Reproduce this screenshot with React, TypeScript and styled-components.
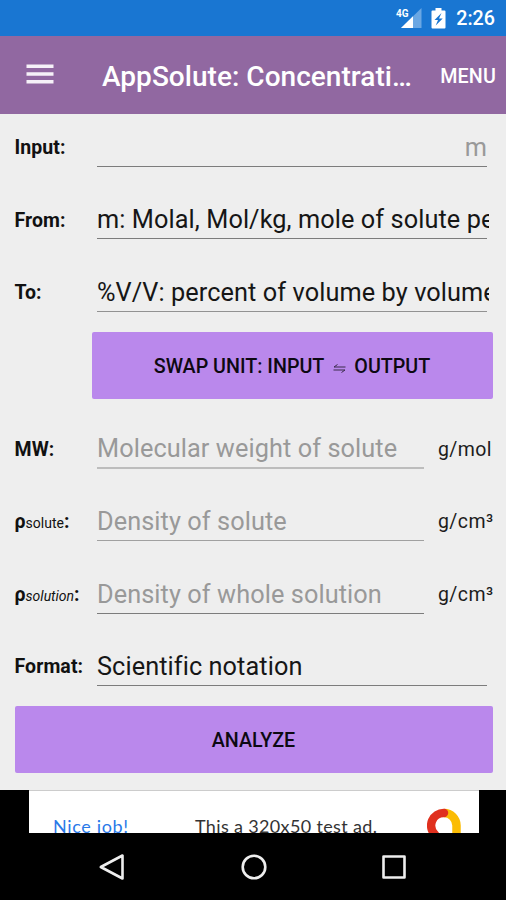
import React from "react";
import styled, { createGlobalStyle } from "styled-components";

const GlobalStyle = createGlobalStyle`
  * { box-sizing: border-box; }
  html, body { margin: 0; padding: 0; background: #000; }
  body { font-family: Roboto, "Liberation Sans", sans-serif; overflow: hidden; }
`;

const Screen = styled.div`
  width: 506px;
  height: 900px;
  display: flex;
  flex-direction: column;
  background: #eee;
  overflow: hidden;
`;

const StatusBar = styled.div`
  height: 36px;
  flex: none;
  display: flex;
  align-items: center;
  justify-content: flex-end;
  padding-right: 11px;
  background: #1976d2;
  color: #fff;
`;

const SignalIcon = styled.svg`
  width: 27px;
  height: 22px;
  margin-right: 9px;
`;

const BatteryIcon = styled.svg`
  width: 15px;
  height: 21px;
  margin-right: 10px;
`;

const Clock = styled.span`
  font-size: 19.7px;
  font-weight: 500;
  line-height: 36px;
  padding-top: 2px;
`;

const AppBar = styled.header`
  height: 78px;
  flex: none;
  display: flex;
  align-items: center;
  padding: 4px 10px 0 26px;
  background: #9168a1;
  color: #fff;
`;

const MenuIcon = styled.svg`
  width: 28px;
  height: 20px;
  margin: -6px 48px 0 0;
`;

const Title = styled.h1`
  flex: 1;
  margin: 0;
  font-size: 28px;
  font-weight: 500;
  line-height: 36px;
  letter-spacing: 0.03px;
  white-space: nowrap;
`;

const MenuButton = styled.button`
  border: 0;
  padding: 0;
  background: none;
  color: #fff;
  font: 500 19.7px/30px Roboto, sans-serif;
  letter-spacing: 0.15px;
`;

const Form = styled.main`
  height: 676px;
  flex: none;
  padding: 14px 13.5px 0 14.5px;
  display: flex;
  flex-direction: column;
`;

const Row = styled.div<{ $gap?: number }>`
  display: flex;
  flex: none;
  align-items: center;
  height: 39px;
  margin-top: ${(p) => p.$gap ?? 33.4}px;
`;

const Label = styled.label`
  width: 82.5px;
  flex: none;
  padding-top: 1.5px;
  font-size: 19.5px;
  font-weight: 700;
  line-height: 28px;
  letter-spacing: 0.08px;
  color: #111;
  white-space: nowrap;
`;

const Subscript = styled.span<{ $italic?: boolean }>`
  font-size: 14px;
  font-weight: 400;
  letter-spacing: 0;
  font-style: ${(p) => (p.$italic ? "italic" : "normal")};
`;

const Field = styled.div<{
  $short?: boolean;
  $hint?: boolean;
  $right?: boolean;
  $line?: string;
  $thick?: boolean;
}>`
  width: ${(p) => (p.$short ? 327 : 390)}px;
  height: ${(p) => (p.$thick ? 40 : 39)}px;
  flex: none;
  border-bottom: ${(p) => (p.$thick ? 2 : 1)}px solid ${(p) => p.$line ?? "#7c7c7c"};
  color: ${(p) => (p.$hint ? "#999" : "#161616")};
  text-align: ${(p) => (p.$right ? "right" : "left")};
  padding-right: ${(p) => (p.$right ? 2 : 0)}px;
`;

const Value = styled.div`
  width: calc(100% + 2px);
  overflow: hidden;
  font-size: 25.3px;
  line-height: 39px;
  letter-spacing: 0.08px;
  white-space: nowrap;
`;

const Unit = styled.span`
  margin-left: 14px;
  padding-top: 1px;
  font-size: 19.5px;
  line-height: 28px;
  letter-spacing: 0.4px;
  color: #1c1c1c;
  white-space: nowrap;
`;

const ActionButton = styled.button<{ $top: number; $indent?: boolean }>`
  height: 67px;
  flex: none;
  margin: ${(p) => p.$top}px 0 0 ${(p) => (p.$indent ? 77 : 0)}px;
  display: flex;
  align-items: center;
  justify-content: center;
  gap: 8.5px;
  border: 0;
  border-radius: 2px;
  padding: 4px 0 0;
  background: #ba88ec;
  color: #0d0912;
  font: 500 19.7px/30px Roboto, sans-serif;
`;

const SwapIcon = styled.svg`
  width: 13px;
  height: 9px;
  margin-top: 2px;
`;

const AdSlot = styled.aside`
  height: 44px;
  flex: none;
  padding: 0 27px 0 29px;
  background: #000;
`;

const Ad = styled.div`
  height: 43px;
  display: flex;
  overflow: hidden;
  border-top: 1px solid #ccc;
  background: #fff;
  font-family: Lato, "Open Sans", sans-serif;
  font-size: 18px;
  line-height: 24px;
  color: #333;
`;

const AdLink = styled.span`
  width: 142px;
  margin: 23px 0 0 24px;
  color: #2979e8;
  letter-spacing: 0.65px;
`;

const AdText = styled.span`
  width: 232px;
  margin-top: 23px;
  letter-spacing: 0.35px;
  white-space: nowrap;
`;

const AdLogo = styled.svg`
  width: 34px;
  height: 40px;
  margin-top: 17px;
  flex: none;
`;

const NavBar = styled.nav`
  height: 66px;
  flex: none;
  display: flex;
  align-items: center;
  justify-content: center;
  gap: 112.5px;
  padding-left: 1px;
  background: #000;
`;

const NavIcon = styled.svg`
  width: 28px;
  height: 28px;
  fill: none;
  stroke: #eee;
  stroke-width: 2.6;
  stroke-linejoin: round;
`;

export default function App() {
  return (
    <>
      <GlobalStyle />
      <Screen>
        <StatusBar>
          <SignalIcon viewBox="0 0 27 22">
            <path d="M6 21 L26.500 1 V21 Z" fill="#6ba7e3" />
            <path d="M6 21 L18 9.300 V21 Z" fill="#fff" />
            <path d="M0 0 H14 V10.500 H9 L4 14 H0 Z" fill="#1976d2" />
            <text x="1" y="10" fill="#fff" fontFamily="Roboto" fontSize="11.500" fontWeight="700" textLength="12.500" lengthAdjust="spacingAndGlyphs">
              4G
            </text>
          </SignalIcon>
          <BatteryIcon viewBox="0 0 15 21">
            <path d="M4.500 0 H10.500 V2.500 H13.500 Q14.500 2.500 14.500 3.500 V19.500 Q14.500 20.500 13.500 20.500 H1.500 Q.5 20.500 .5 19.500 V3.500 Q.5 2.500 1.500 2.500 H4.500 Z" fill="#fff" />
            <path d="M10.500 5 L3.500 12 H7 L4.700 17.500 L11.700 10.500 H8 Z" fill="#1976d2" />
          </BatteryIcon>
          <Clock>2:26</Clock>
        </StatusBar>

        <AppBar>
          <MenuIcon viewBox="0 0 28 20">
            <path d="M.5 2.200 H27.500 M.5 10 H27.500 M.5 17.800 H27.500" stroke="#f6f1f8" strokeWidth="3.400" />
          </MenuIcon>
          <Title>AppSolute: Concentrati…</Title>
          <MenuButton>MENU</MenuButton>
        </AppBar>

        <Form>
          <Row $gap={0}>
            <Label>Input:</Label>
            <Field $hint $right><Value>m</Value></Field>
          </Row>
          <Row>
            <Label>From:</Label>
            <Field><Value>m: Molal, Mol/kg, mole of solute per kg</Value></Field>
          </Row>
          <Row>
            <Label>To:</Label>
            <Field $line="#929292"><Value>%V/V: percent of volume by volume</Value></Field>
          </Row>
          <ActionButton $top={20.2} $indent>
            <span>SWAP UNIT: INPUT</span>
            <SwapIcon viewBox="0 0 13 9">
              <path d="M12.500 3 H1 L4.500 .5 M.5 6 H12 L8.500 8.500" fill="none" stroke="#3b2b4b" strokeWidth="1" />
            </SwapIcon>
            <span>OUTPUT</span>
          </ActionButton>
          <Row $gap={31}>
            <Label>MW:</Label>
            <Field $short $hint $line="#bdbdbd" $thick><Value>Molecular weight of solute</Value></Field>
            <Unit>g/mol</Unit>
          </Row>
          <Row>
            <Label>ρ<Subscript>solute</Subscript>:</Label>
            <Field $short $hint $line="#a0a0a0"><Value>Density of solute</Value></Field>
            <Unit>g/cm³</Unit>
          </Row>
          <Row>
            <Label>ρ<Subscript $italic>solution</Subscript>:</Label>
            <Field $short $hint><Value>Density of whole solution</Value></Field>
            <Unit>g/cm³</Unit>
          </Row>
          <Row $gap={33.2}>
            <Label>Format:</Label>
            <Field><Value>Scientific notation</Value></Field>
          </Row>
          <ActionButton $top={20}>ANALYZE</ActionButton>
        </Form>

        <AdSlot>
          <Ad>
            <AdLink>Nice job!</AdLink>
            <AdText>This a 320x50 test ad.</AdText>
            <AdLogo viewBox="0 0 34 40">
              <path d="M17 5 A12.500 12.500 0 0 1 29.500 17.500 V32" fill="none" stroke="#fbbc04" strokeWidth="8.500" />
              <path d="M17 5 A12.500 12.500 0 0 0 8 26.500" fill="none" stroke="#e0301e" strokeWidth="8.500" strokeLinecap="round" />
            </AdLogo>
          </Ad>
        </AdSlot>

        <NavBar>
          <NavIcon viewBox="0 0 28 28">
            <path d="M1.800 14 L23.500 2.500 V25.500 Z" />
          </NavIcon>
          <NavIcon viewBox="0 0 28 28">
            <circle cx="14" cy="14" r="11.300" />
          </NavIcon>
          <NavIcon viewBox="0 0 28 28">
            <rect x="3.500" y="3.500" width="21" height="21" />
          </NavIcon>
        </NavBar>
      </Screen>
    </>
  );
}
